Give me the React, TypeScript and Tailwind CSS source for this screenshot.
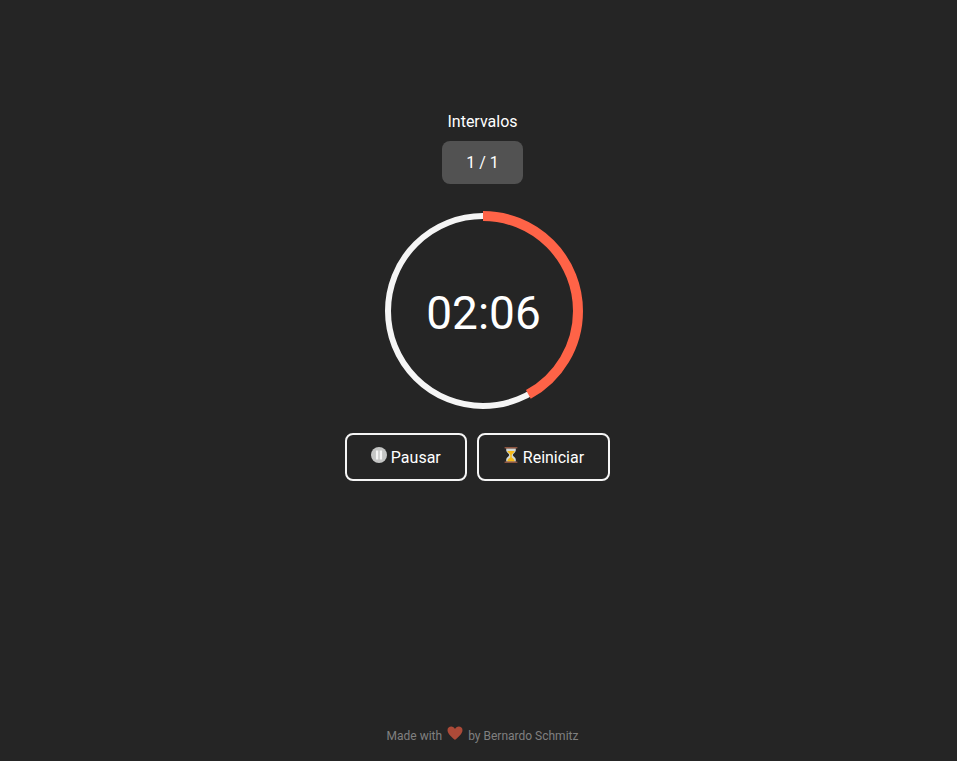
const RADIUS = 95;
const CIRCUMFERENCE = 2 * Math.PI * RADIUS;

function PauseIcon() {
  return (
    <svg className="mb-1.5 size-4" viewBox="0 0 16 16" aria-hidden="true">
      <circle cx="8" cy="8" r="8" fill="#c5c6c5" />
      <rect x="4.9" y="3.5" width="2.4" height="9" fill="#f5f5f5" />
      <rect x="8.7" y="3.5" width="2.4" height="9" fill="#f5f5f5" />
    </svg>
  );
}

function HourglassIcon() {
  return (
    <svg className="mb-1.5 size-4" viewBox="0 0 16 16" aria-hidden="true">
      <path
        d="M3.2 1.2h9.6v2.4c0 2-3 3-3 4.4s3 2.4 3 4.4v2.4H3.200v-2.400c0-2 3-3 3-4.400s-3-2.400-3-4.400z"
        fill="#d3d9d6"
      />
      <path
        d="M4.300 4h7.400C11.200 5.800 9 6.600 8.700 8v2.200c.7 1 3 1.900 3 4.300H4.300c0-2.400 2.300-3.300 3-4.300V8C7 6.600 4.800 5.800 4.300 4z"
        fill="#f5b916"
      />
      <rect x="1.5" y="0" width="13" height="1.400" rx="0.4" fill="#8c5440" />
      <rect x="1.5" y="14.500" width="13" height="1.400" rx="0.4" fill="#8c5440" />
    </svg>
  );
}

function HeartIcon() {
  return (
    <svg className="mb-1.5 size-4" viewBox="0 0 16 16" aria-label="love" role="img">
      <path
        d="M8 15C6.500 13.300.5 9.300.5 5.200.5 2.800 2.200 1.500 4.200 1.500 6 1.500 7.300 2.500 8 4c.7-1.500 2-2.500 3.800-2.500 2 0 3.700 1.300 3.700 3.700C15.500 9.300 9.500 13.300 8 15z"
        fill="#ac4a38"
      />
    </svg>
  );
}

function ProgressRing({ progress, label }: { progress: number; label: string }) {
  return (
    <div className="grid size-[200px] place-items-center">
      <svg className="col-start-1 row-start-1 size-full" viewBox="0 0 200 200" aria-hidden="true">
        <circle cx="100" cy="100" r={RADIUS} fill="none" stroke="#f5f5f5" strokeWidth="6" />
        <circle
          cx="100"
          cy="100"
          r={RADIUS}
          fill="none"
          stroke="#ff6347"
          strokeWidth="10"
          strokeDasharray={`${CIRCUMFERENCE * progress} ${CIRCUMFERENCE}`}
          transform="rotate(-90 100 100)"
        />
      </svg>
      <time className="col-start-1 row-start-1 pt-1 pl-0.5 text-[46px] leading-none">{label}</time>
    </div>
  );
}

const buttonClass =
  "mr-2.5 flex h-12 cursor-pointer items-center gap-1 rounded-lg border-2 border-[#f5f5f5] px-6 pt-0.5 text-base";

export default function App() {
  return (
    <div className="flex min-h-screen flex-col items-center bg-[#252525] pl-2 font-['Roboto',sans-serif] text-white">
      <main className="flex grow flex-col items-center pt-[110px]">
        <h1 className="text-base leading-6">Intervalos</h1>
        <p className="mt-[7px] rounded-lg bg-[#525252] px-6 py-3 text-base leading-[19px]">1 / 1</p>
        <div className="mt-[27px]">
          <ProgressRing progress={0.42} label="02:06" />
        </div>
        <div className="mt-[22px] flex">
          <button type="button" className={buttonClass}>
            <PauseIcon />
            Pausar
          </button>
          <button type="button" className={buttonClass}>
            <HourglassIcon />
            Reiniciar
          </button>
        </div>
      </main>
      <footer className="flex items-center pb-[14px] text-xs leading-5 text-[#808080]">
        <span>Made with</span>
        <span className="mx-[5px]">
          <HeartIcon />
        </span>
        <span>by Bernardo Schmitz</span>
      </footer>
    </div>
  );
}
